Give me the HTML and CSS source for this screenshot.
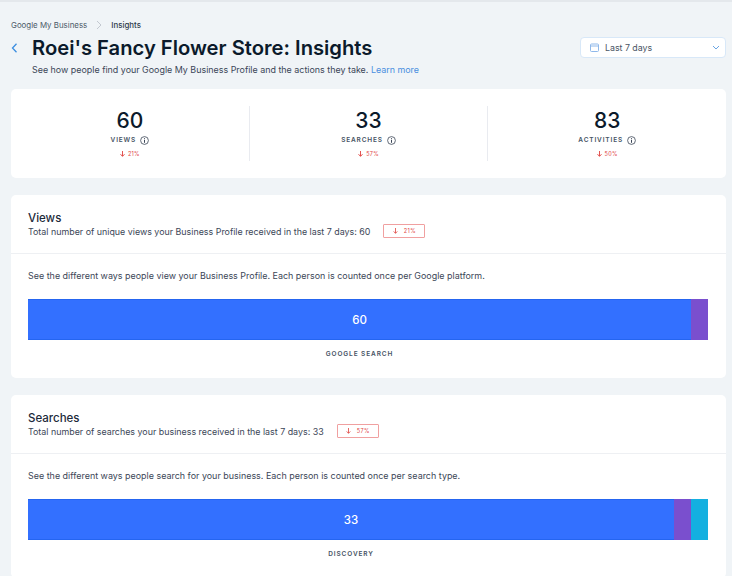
FILE: index.html
```html
<!DOCTYPE html>
<html lang="en">
<head>
<meta charset="utf-8">
<title>Insights</title>
<link rel="stylesheet" href="styles.css">
</head>
<body>
<div class="page">
  <nav class="crumbs">
    <span>Google My Business</span>
    <svg class="crumb-sep" width="6" height="10" viewBox="0 0 6 10"><path d="M1 1l4 4-4 4" fill="none" stroke="#c3c8d0" stroke-width="1"/></svg>
    <span class="crumb-current">Insights</span>
  </nav>
  <header class="head">
    <svg class="back" width="7" height="10" viewBox="0 0 7 10"><path d="M5.5 .8L1.5 5l4 4.2" fill="none" stroke="#3b8ee0" stroke-width="1.3"/></svg>
    <div class="head-text">
      <h1>Roei's Fancy Flower Store: Insights</h1>
      <p>See how people find your Google My Business Profile and the actions they take. <a>Learn more</a></p>
    </div>
    <div class="select">
      <svg width="9" height="9" viewBox="0 0 9 9"><rect x=".5" y="1" width="8" height="7.5" rx="1" fill="none" stroke="#8fb8ea"/><path d="M.5 3h8" stroke="#8fb8ea"/></svg>
      <span class="select-label">Last 7 days</span>
      <svg width="8" height="5" viewBox="0 0 8 5"><path d="M1 1l3 3 3-3" fill="none" stroke="#6aa5e4" stroke-width="1"/></svg>
    </div>
  </header>

  <section class="card stats">
    <div class="stat">
      <div class="num">60</div>
      <div class="lbl">VIEWS <svg class="info" width="9" height="9" viewBox="0 0 9 9"><circle cx="4.5" cy="4.5" r="3.9" fill="none" stroke="#3b4657" stroke-width=".8"/><path d="M4.5 2.2v.9M4.5 3.8v3" stroke="#3b4657" stroke-width="1"/></svg></div>
      <div class="delta"><svg width="5" height="6" viewBox="0 0 5 6"><path d="M2.5 0v5M.5 3.2l2 2.2 2-2.2" fill="none" stroke="#e0413e" stroke-width=".9"/></svg> 21%</div>
    </div>
    <div class="stat">
      <div class="num">33</div>
      <div class="lbl">SEARCHES <svg class="info" width="9" height="9" viewBox="0 0 9 9"><circle cx="4.5" cy="4.5" r="3.9" fill="none" stroke="#3b4657" stroke-width=".8"/><path d="M4.5 2.2v.9M4.5 3.8v3" stroke="#3b4657" stroke-width="1"/></svg></div>
      <div class="delta"><svg width="5" height="6" viewBox="0 0 5 6"><path d="M2.5 0v5M.5 3.2l2 2.2 2-2.2" fill="none" stroke="#e0413e" stroke-width=".9"/></svg> 57%</div>
    </div>
    <div class="stat">
      <div class="num">83</div>
      <div class="lbl">ACTIVITIES <svg class="info" width="9" height="9" viewBox="0 0 9 9"><circle cx="4.5" cy="4.5" r="3.9" fill="none" stroke="#3b4657" stroke-width=".8"/><path d="M4.5 2.2v.9M4.5 3.8v3" stroke="#3b4657" stroke-width="1"/></svg></div>
      <div class="delta"><svg width="5" height="6" viewBox="0 0 5 6"><path d="M2.5 0v5M.5 3.2l2 2.2 2-2.2" fill="none" stroke="#e0413e" stroke-width=".9"/></svg> 50%</div>
    </div>
  </section>

  <section class="card panel">
    <div class="panel-head">
      <h2>Views</h2>
      <div class="sub"><span>Total number of unique views your Business Profile received in the last 7 days: 60</span>
        <span class="tag"><svg width="5" height="6" viewBox="0 0 5 6"><path d="M2.5 0v5M.7 3.4l1.8 2 1.8-2" fill="none" stroke="#e0413e" stroke-width=".8"/></svg> 21%</span></div>
    </div>
    <div class="panel-body">
      <p class="desc">See the different ways people view your Business Profile. Each person is counted once per Google platform.</p>
      <div class="bar">
        <div class="seg blue grow">60</div>
        <div class="seg purple"></div>
      </div>
      <div class="bar-label label-one">GOOGLE SEARCH</div>
    </div>
  </section>

  <section class="card panel">
    <div class="panel-head">
      <h2>Searches</h2>
      <div class="sub"><span>Total number of searches your business received in the last 7 days: 33</span>
        <span class="tag"><svg width="5" height="6" viewBox="0 0 5 6"><path d="M2.5 0v5M.7 3.4l1.8 2 1.8-2" fill="none" stroke="#e0413e" stroke-width=".8"/></svg> 57%</span></div>
    </div>
    <div class="panel-body">
      <p class="desc">See the different ways people search for your business. Each person is counted once per search type.</p>
      <div class="bar">
        <div class="seg blue grow">33</div>
        <div class="seg purple"></div>
        <div class="seg cyan"></div>
      </div>
      <div class="bar-label label-two">DISCOVERY</div>
    </div>
  </section>
</div>
</body>
</html>
```
FILE: styles.css
```css
* { box-sizing: border-box; }
html, body { margin: 0; height: 100%; overflow: hidden; }
body {
  background: #f0f4f7;
  font-family: Inter, "Liberation Sans", sans-serif;
  color: #162d3d;
  border-top: 2px solid #e4e8ec;
}
.page { padding: 18px 6px 0 11px; }
.crumbs {
  display: flex; align-items: center; gap: 9px;
  font-size: 7.9px; line-height: 10px; color: #4c5a68; height: 10px;
}
.crumb-current { color: #2b3a4a; font-weight: 500; }
.head { display: flex; align-items: flex-start; margin-top: 4px; height: 55px; }
.back { margin-top: 9px; margin-right: 14px; flex: none; }
.head-text { flex: 1; min-width: 0; }
h1 {
  margin: 0; font-size: 20.2px; line-height: 28px; font-weight: 600;
  color: #0b1a2b;
}
.head-text p { margin: 1px 0 0; font-size: 8.92px; line-height: 13px; color: #3b4657; }
.head-text a { color: #4a8fe0; }
.select {
  width: 146px; height: 21px; margin-top: 3px;
  background: #fff; border: 1px solid #d8e8f8; border-radius: 4px;
  display: flex; align-items: center; padding: 0 5px 0 9px;
}
.select-label { flex: 1; margin-left: 6px; font-size: 8.8px; color: #4a5565; }
.card { background: #fff; border-radius: 5px; }
.stats { display: flex; height: 89px; padding: 17px 0; }
.stat {
  flex: 1; text-align: center; height: 55px;
  border-right: 1px solid #e9ebf0;
}
.stat:last-child { border-right: 0; }
.num { font-size: 21px; line-height: 26px; font-weight: 500; color: #0b1a2b; margin-top: 2px; }
.lbl {
  display: flex; justify-content: center; align-items: center; gap: 4px;
  font-size: 6.5px; line-height: 10px; letter-spacing: .85px; color: #465364; font-weight: 600;
  margin-top: 1px;
}
.delta {
  display: flex; justify-content: center; align-items: center; gap: 3px;
  font-size: 5.5px; line-height: 8px; color: #e0413e; margin-top: 5px; letter-spacing: .3px;
}
.panel { margin-top: 17px; height: 182.5px; }
.panel + .panel { margin-top: 17.5px; }
.panel-head { height: 59px; padding: 17px 18px 0 17px; border-bottom: 1px solid #eef0f3; }
h2 { margin: 0; font-size: 11.5px; line-height: 12px; font-weight: 500; color: #1c2a3a; }
.sub { display: flex; align-items: center; gap: 13px; font-size: 8.9px; line-height: 13px; color: #3b4657; height: 14px; }
.tag {
  display: flex; align-items: center; justify-content: center; gap: 6px;
  width: 42px; height: 14px; border: 1px solid #f0a0a0; border-radius: 1px;
  font-size: 5.5px; color: #e0413e; letter-spacing: .4px;
}
.panel-body { padding: 15px 18px 0 17px; }
.desc { margin: 0; font-size: 8.95px; line-height: 13px; color: #3b4657; }
.bar { display: flex; height: 41px; margin-top: 17px; }
.seg { height: 100%; display: flex; align-items: center; justify-content: center; }
.blue {
  background: #3370ff; color: #fff; font-size: 11.5px; font-weight: 500;
  border-top: 1px solid #2565f0; border-bottom: 1px solid #2565f0;
}
.grow { flex: 1; }
.purple { width: 17px; background: #7a4fce; }
.cyan { width: 17px; background: #14b0e0; }
.bar-label {
  text-align: center; font-size: 6.5px; line-height: 10px; font-weight: 600;
  letter-spacing: .9px; color: #465364; margin-top: 9px;
}
.label-one { padding-right: 17px; }
.label-two { padding-right: 34px; }
```
